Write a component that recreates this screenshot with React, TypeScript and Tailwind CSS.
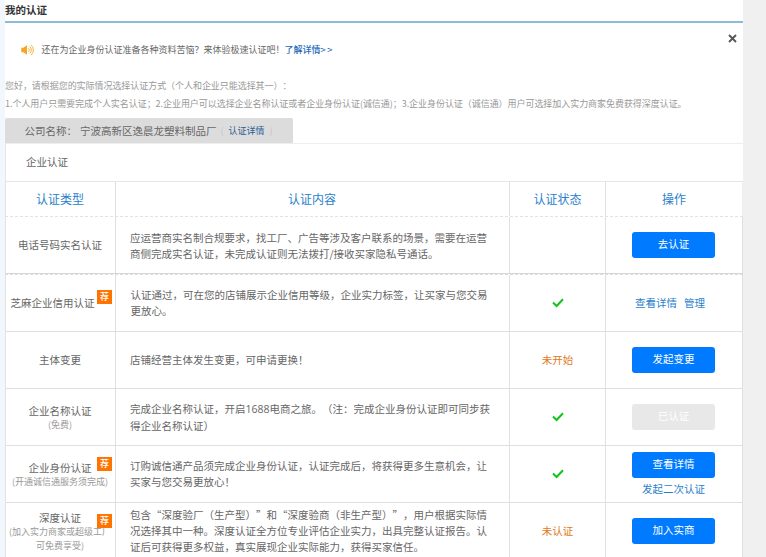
import type { ReactNode } from "react";
import clsx from "clsx";

interface CertRow {
    id: string;
    name: string;
    notes?: string[];
    recommended?: boolean;
    content: ReactNode[];
    status: "passed" | "none" | string;
    action: ReactNode;
    className: string;
    nameClassName?: string;
    contentClassName?: string;
    badgeClassName?: string;
}

function ActionButton({ children, disabled }: { children: ReactNode; disabled?: boolean }) {
    return (
        <button
            disabled={disabled}
            className={clsx(
                "block h-[26px] w-[83px] rounded-[3px] pb-[2px] text-[10.5px] leading-[24px] text-white",
                disabled ? "bg-[#e8e8e8]" : "bg-[#007bff]"
            )}
        >
            {children}
        </button>
    );
}

function ActionLink({ children }: { children: ReactNode }) {
    return (
        <a href="#" className="text-[#2a7fcb]">
            {children}
        </a>
    );
}

function CheckIcon() {
    return (
        <svg width="12" height="10" viewBox="0 0 12 10" fill="none" className="mb-px">
            <path d="M1 4.6 4.6 8 11 1.3" stroke="#12c31c" strokeWidth="2" />
        </svg>
    );
}

function SpeakerIcon() {
    return (
        <svg width="13" height="12" viewBox="0 0 13 12" fill="none" className="shrink-0">
            <path d="M0.3 3.8h2L6 1.2v9.6L2.3 8.2h-2z" fill="#f5a623" />
            <path
                d="M7.5 4.2a2.5 2.5 0 0 1 0 3.6M8.8 2.6a4.6 4.6 0 0 1 0 6.8M10.2 1.1a6.6 6.6 0 0 1 0 9.8"
                stroke="#f5b340"
                strokeWidth="1"
            />
        </svg>
    );
}

const rows: CertRow[] = [
    {
        id: "phone",
        name: "电话号码实名认证",
        content: [
            "应运营商实名制合规要求，找工厂、广告等涉及客户联系的场景，需要在运营",
            "商侧完成实名认证，未完成认证则无法拨打/接收买家隐私号通话。",
        ],
        status: "none",
        action: <ActionButton>去认证</ActionButton>,
        className: "h-[57px] border-b border-[#d6d6d6]",
        nameClassName: "pb-px pr-px",
        contentClassName: "pl-[14px] pt-[2px]",
    },
    {
        id: "zhima",
        name: "芝麻企业信用认证",
        recommended: true,
        content: [
            "认证通过，可在您的店铺展示企业信用等级，企业实力标签，让买家与您交易",
            "更放心。",
        ],
        status: "passed",
        action: (
            <div className="-ml-[7px] flex gap-[7px]">
                <ActionLink>查看详情</ActionLink>
                <ActionLink>管理</ActionLink>
            </div>
        ),
        className: "h-[58px] border-t border-t-[#dcdcdc] [border-top-style:dashed] border-b border-b-[#dfdfdf]",
        nameClassName: "pb-px pr-[16px]",
        contentClassName: "pl-[14.5px]",
        badgeClassName: "left-[91px] top-[15px]",
    },
    {
        id: "subject",
        name: "主体变更",
        content: ["店铺经营主体发生变更，可申请更换！"],
        status: "未开始",
        action: <ActionButton>发起变更</ActionButton>,
        className: "h-[57px] border-b border-[#dfdfdf]",
        nameClassName: "pb-px pr-px",
        contentClassName: "pl-[14px]",
    },
    {
        id: "name",
        name: "企业名称认证",
        notes: ["(免费)"],
        content: [
            <>
                完成企业名称认证，开启<span className="font-['Open_Sans']">1688</span>
                电商之旅。（注：完成企业身份认证即可同步获
            </>,
            "得企业名称认证）",
        ],
        status: "passed",
        action: <ActionButton disabled>已认证</ActionButton>,
        className: "h-[57px] border-b border-[#dfdfdf]",
        nameClassName: "pr-px",
        contentClassName: "pl-[14px] pt-px",
    },
    {
        id: "identity",
        name: "企业身份认证",
        notes: ["(开通诚信通服务须完成)"],
        recommended: true,
        content: [
            "订购诚信通产品须完成企业身份认证，认证完成后，将获得更多生意机会，让",
            "买家与您交易更放心！",
        ],
        status: "passed",
        action: (
            <div className="flex flex-col items-center gap-[3px]">
                <ActionButton>查看详情</ActionButton>
                <ActionLink>发起二次认证</ActionLink>
            </div>
        ),
        className: "h-[57px] border-b border-[#dfdfdf]",
        nameClassName: "pr-px",
        contentClassName: "pl-[14px]",
        badgeClassName: "left-[91px] top-[11px]",
    },
    {
        id: "depth",
        name: "深度认证",
        notes: ["(加入实力商家或超级工厂", "可免费享受)"],
        recommended: true,
        content: [
            "包含“深度验厂（生产型）”和“深度验商（非生产型）”，用户根据实际情",
            "况选择其中一种。深度认证全方位专业评估企业实力，出具完整认证报告。认",
            "证后可获得更多权益，真实展现企业实际能力，获得买家信任。",
        ],
        status: "未认证",
        action: <ActionButton>加入实商</ActionButton>,
        className: "h-[56px]",
        nameClassName: "pr-px pt-px",
        contentClassName: "pl-[14px]",
        badgeClassName: "left-[91px] top-[11px]",
    },
];

const columns = "grid grid-cols-[110px_394px_96px_137px] border-l border-l-[#e2e2e2]";
const cell = "flex items-center justify-center border-r border-[#e0e0e0]";

function StatusCell({ status }: { status: string }) {
    if (status === "none") return null;
    if (status === "passed") return <CheckIcon />;
    return <span className="text-[#e07a22]">{status}</span>;
}

function CertTableRow({ row }: { row: CertRow }) {
    return (
        <div className={clsx(columns, row.className)}>
            <div className={clsx(cell, "relative flex-col", row.nameClassName)}>
                <span className="leading-[15px]">{row.name}</span>
                {row.notes?.map((note) => (
                    <span key={note} className="text-[9px] leading-[14px] text-[#999]">
                        {note}
                    </span>
                ))}
                {row.recommended && (
                    <span
                        className={clsx(
                            "absolute h-[14px] w-[15px] bg-[#ff7300] text-center text-[9px] font-medium leading-[14px] text-white",
                            row.badgeClassName
                        )}
                    >
                        荐
                    </span>
                )}
            </div>
            <div className={clsx(cell, "flex-col !items-start leading-[15.75px]", row.contentClassName)}>
                {row.content.map((line, index) => (
                    <span key={index}>{line}</span>
                ))}
            </div>
            <div className={cell}>
                <StatusCell status={row.status} />
            </div>
            <div className={clsx(cell, "pr-px")}>{row.action}</div>
        </div>
    );
}

export default function App() {
    return (
        <div
            lang="zh-CN"
            className="flex h-[557px] w-[766px] overflow-hidden whitespace-nowrap bg-[#f0f0f0] font-['Noto_Sans_CJK_SC',sans-serif] text-[10.5px] text-[#666] [text-spacing-trim:space-all]"
        >
            <div className="w-[5px] shrink-0 bg-[#f2f6fd]" />
            <main className="w-[738px] shrink-0 bg-white">
                <h1 className="h-[23px] border-b-2 border-[#8dbbdc] font-bold leading-[19px] text-[#333]">
                    我的认证
                </h1>

                <div className="flex h-[54px] items-start justify-between text-[9px]">
                    <div className="flex items-center pl-[16px] pt-[20px] leading-[14px]">
                        <SpeakerIcon />
                        <span className="ml-[7.5px]">还在为企业身份认证准备各种资料苦恼？来体验极速认证吧！</span>
                        <a href="#" className="font-medium text-[#1b69b8]">
                            了解详情<span className="tracking-[1.5px]">&gt;&gt;</span>
                        </a>
                    </div>
                    <svg width="9" height="9" viewBox="0 0 9 9" className="mr-[6px] mt-[11px]">
                        <path d="M1 1l7 7M8 1L1 8" stroke="#555" strokeWidth="1.8" />
                    </svg>
                </div>

                <div className="h-[41px] text-[9px] leading-[18px] tracking-[-0.05px] text-[#999]">
                    <p>您好，请根据您的实际情况选择认证方式（个人和企业只能选择其一）：</p>
                    <p>
                        1.个人用户只需要完成个人实名认证；2.企业用户可以选择企业名称认证或者企业身份认证(诚信通)；3.企业身份认证（诚信通）用户可选择加入实力商家免费获得深度认证。
                    </p>
                </div>

                <div className="flex h-[25px] w-[288px] items-center rounded-t-[2px] bg-[#dcdcdc] pl-[19.5px]">
                    <span>公司名称：</span>
                    <span className="ml-[3px]">宁波高新区逸晨龙塑料制品厂</span>
                    <span className="ml-[4px] text-[9px] text-[#c4c4c4]">(</span>
                    <a href="#" className="ml-[5px] text-[9px] text-[#2b5f94]">
                        认证详情
                    </a>
                    <span className="ml-[5px] text-[9px] text-[#c4c4c4]">)</span>
                </div>

                <section>
                    <h2 className="h-[39px] border-b border-l border-t border-[#e6e6e6] border-t-[#eeeeee] pl-[20px] leading-[36px]">
                        企业认证
                    </h2>
                    <div className={clsx(columns, "h-[35px] border-b border-b-[#e2e2e2] text-[12px] text-[#2a7fcb] [border-bottom-style:dashed]")}>
                        <div className={clsx(cell, "pr-px")}>认证类型</div>
                        <div className={clsx(cell, "pr-px")}>认证内容</div>
                        <div className={cell}>认证状态</div>
                        <div className={clsx(cell, "!border-r-[#f0f0f0]")}>操作</div>
                    </div>
                    {rows.map((row) => (
                        <CertTableRow key={row.id} row={row} />
                    ))}
                </section>
            </main>
        </div>
    );
}
